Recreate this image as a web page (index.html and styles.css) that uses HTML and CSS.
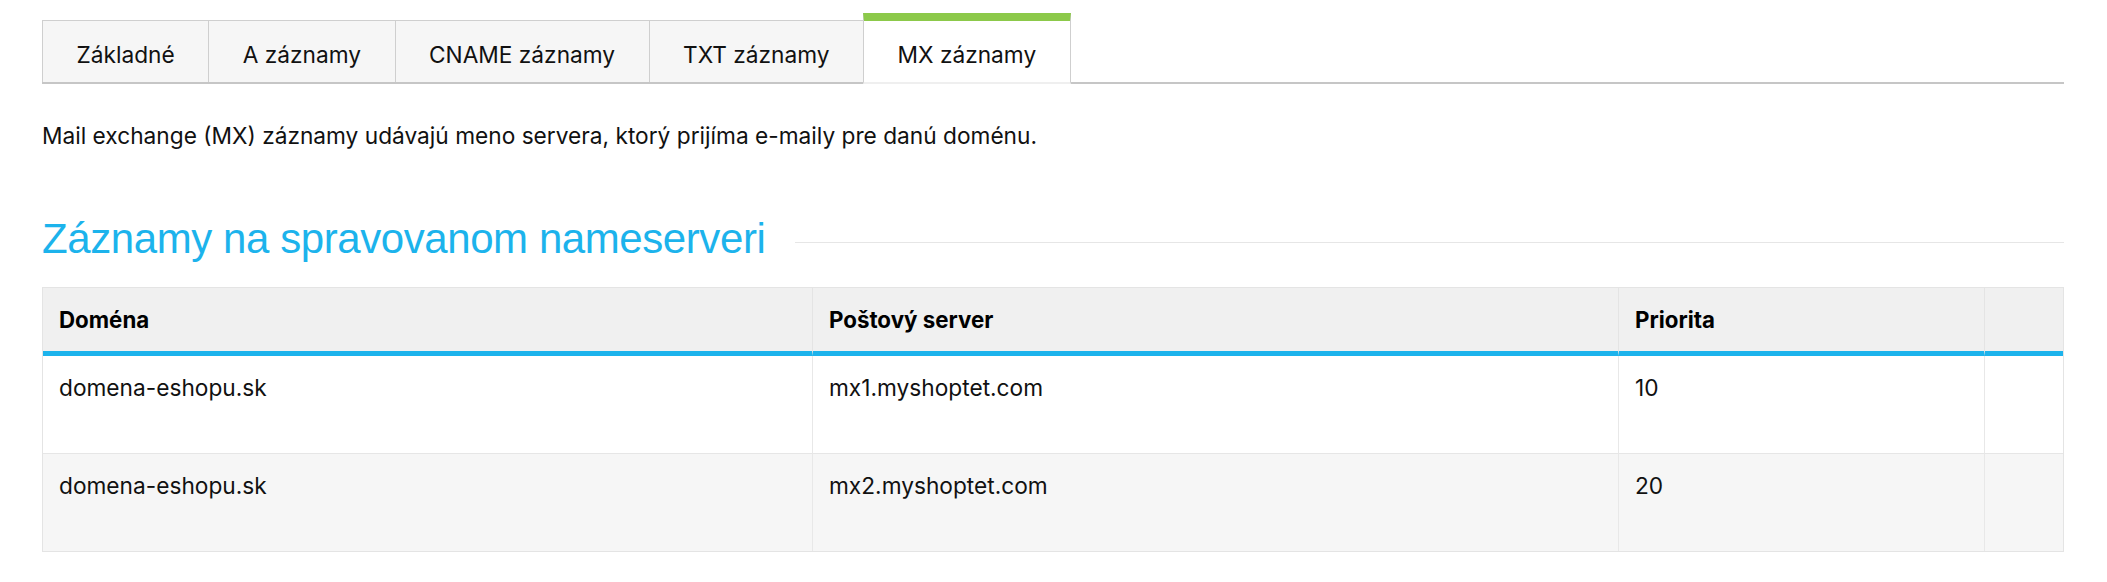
FILE: index.html
```html
<!DOCTYPE html>
<html lang="sk">
<head>
<meta charset="utf-8">
<title>MX záznamy</title>
<link rel="stylesheet" href="styles.css">
</head>
<body>
<div class="page">
  <nav class="tabs">
    <a class="tab">Základné</a>
    <a class="tab">A záznamy</a>
    <a class="tab">CNAME záznamy</a>
    <a class="tab">TXT záznamy</a>
    <a class="tab active">MX záznamy</a>
  </nav>
  <p class="intro">Mail exchange (MX) záznamy udávajú meno servera, ktorý prijíma e-maily pre danú doménu.</p>
  <div class="section-head">
    <h2 class="section-title">Záznamy na spravovanom nameserveri</h2>
    <span class="section-rule"></span>
  </div>
  <table class="records">
    <colgroup>
      <col class="c-domain">
      <col class="c-server">
      <col class="c-prio">
      <col class="c-act">
    </colgroup>
    <thead>
      <tr>
        <th>Doména</th>
        <th>Poštový server</th>
        <th>Priorita</th>
        <th></th>
      </tr>
    </thead>
    <tbody>
      <tr>
        <td>domena-eshopu.sk</td>
        <td>mx1.myshoptet.com</td>
        <td>10</td>
        <td></td>
      </tr>
      <tr class="alt">
        <td>domena-eshopu.sk</td>
        <td>mx2.myshoptet.com</td>
        <td>20</td>
        <td></td>
      </tr>
    </tbody>
  </table>
</div>
</body>
</html>
```

FILE: styles.css
```css
html, body {
  margin: 0;
  padding: 0;
  background: #ffffff;
}

body {
  font-family: "Inter", "Noto Sans", sans-serif;
  font-size: 22.7px;
  line-height: 32px;
  color: #111111;
}

.page {
  padding: 13px 43px 0 42px;
}

/* Tabs */
.tabs {
  display: flex;
  align-items: flex-end;
  border-bottom: 2px solid #c6c6c6;
}

.tab {
  display: block;
  padding: 18px 33.5px 11px;
  background: #f6f6f6;
  border: 1px solid #cfcfcf;
  border-bottom: none;
  margin-right: -1px;
  color: #111111;
  text-decoration: none;
  white-space: nowrap;
}

.tab.active {
  background: #ffffff;
  border-top: 8px solid #8cc94a;
  margin-bottom: -2px;
  padding-bottom: 11px;
  border-bottom: 2px solid #efefef;
}

/* Intro */
.intro {
  margin: 36px 0 0;
}

/* Section heading */
.section-head {
  display: flex;
  align-items: center;
  margin-top: 62px;
}

.section-title {
  margin: 0;
  font-family: "Liberation Sans", Arial, sans-serif;
  font-weight: 400;
  font-size: 42px;
  line-height: 50px;
  letter-spacing: -0.42px;
  color: #1cb3ec;
  white-space: nowrap;
}

.section-rule {
  flex: 1;
  height: 1px;
  background: #e6e6e6;
  margin-left: 30px;
  margin-top: 6px;
}

/* Table */
.records {
  width: 100%;
  margin-top: 23px;
  table-layout: fixed;
  border-collapse: separate;
  border-spacing: 0;
  border: 1px solid #e4e4e4;
}

.c-domain { width: 769px; }
.c-server { width: 806px; }
.c-prio { width: 366px; }
.c-act { width: 79px; }

.records th {
  background: #f0f0f0;
  font-size: 22.3px;
  font-weight: 700;
  text-align: left;
  padding: 16px 16px 15px;
  border-bottom: 5px solid #1cb3ec;
  border-left: 1px solid #e4e4e4;
  color: #000000;
}

.records td {
  padding: 16px 16px 49px;
  border-left: 1px solid #e8e8e8;
  border-bottom: 1px solid #e6e6e6;
  vertical-align: top;
  background: #ffffff;
}

.records th:first-child,
.records td:first-child {
  border-left: none;
}

.records tr.alt td {
  background: #f6f6f6;
  border-bottom: none;
}
```
